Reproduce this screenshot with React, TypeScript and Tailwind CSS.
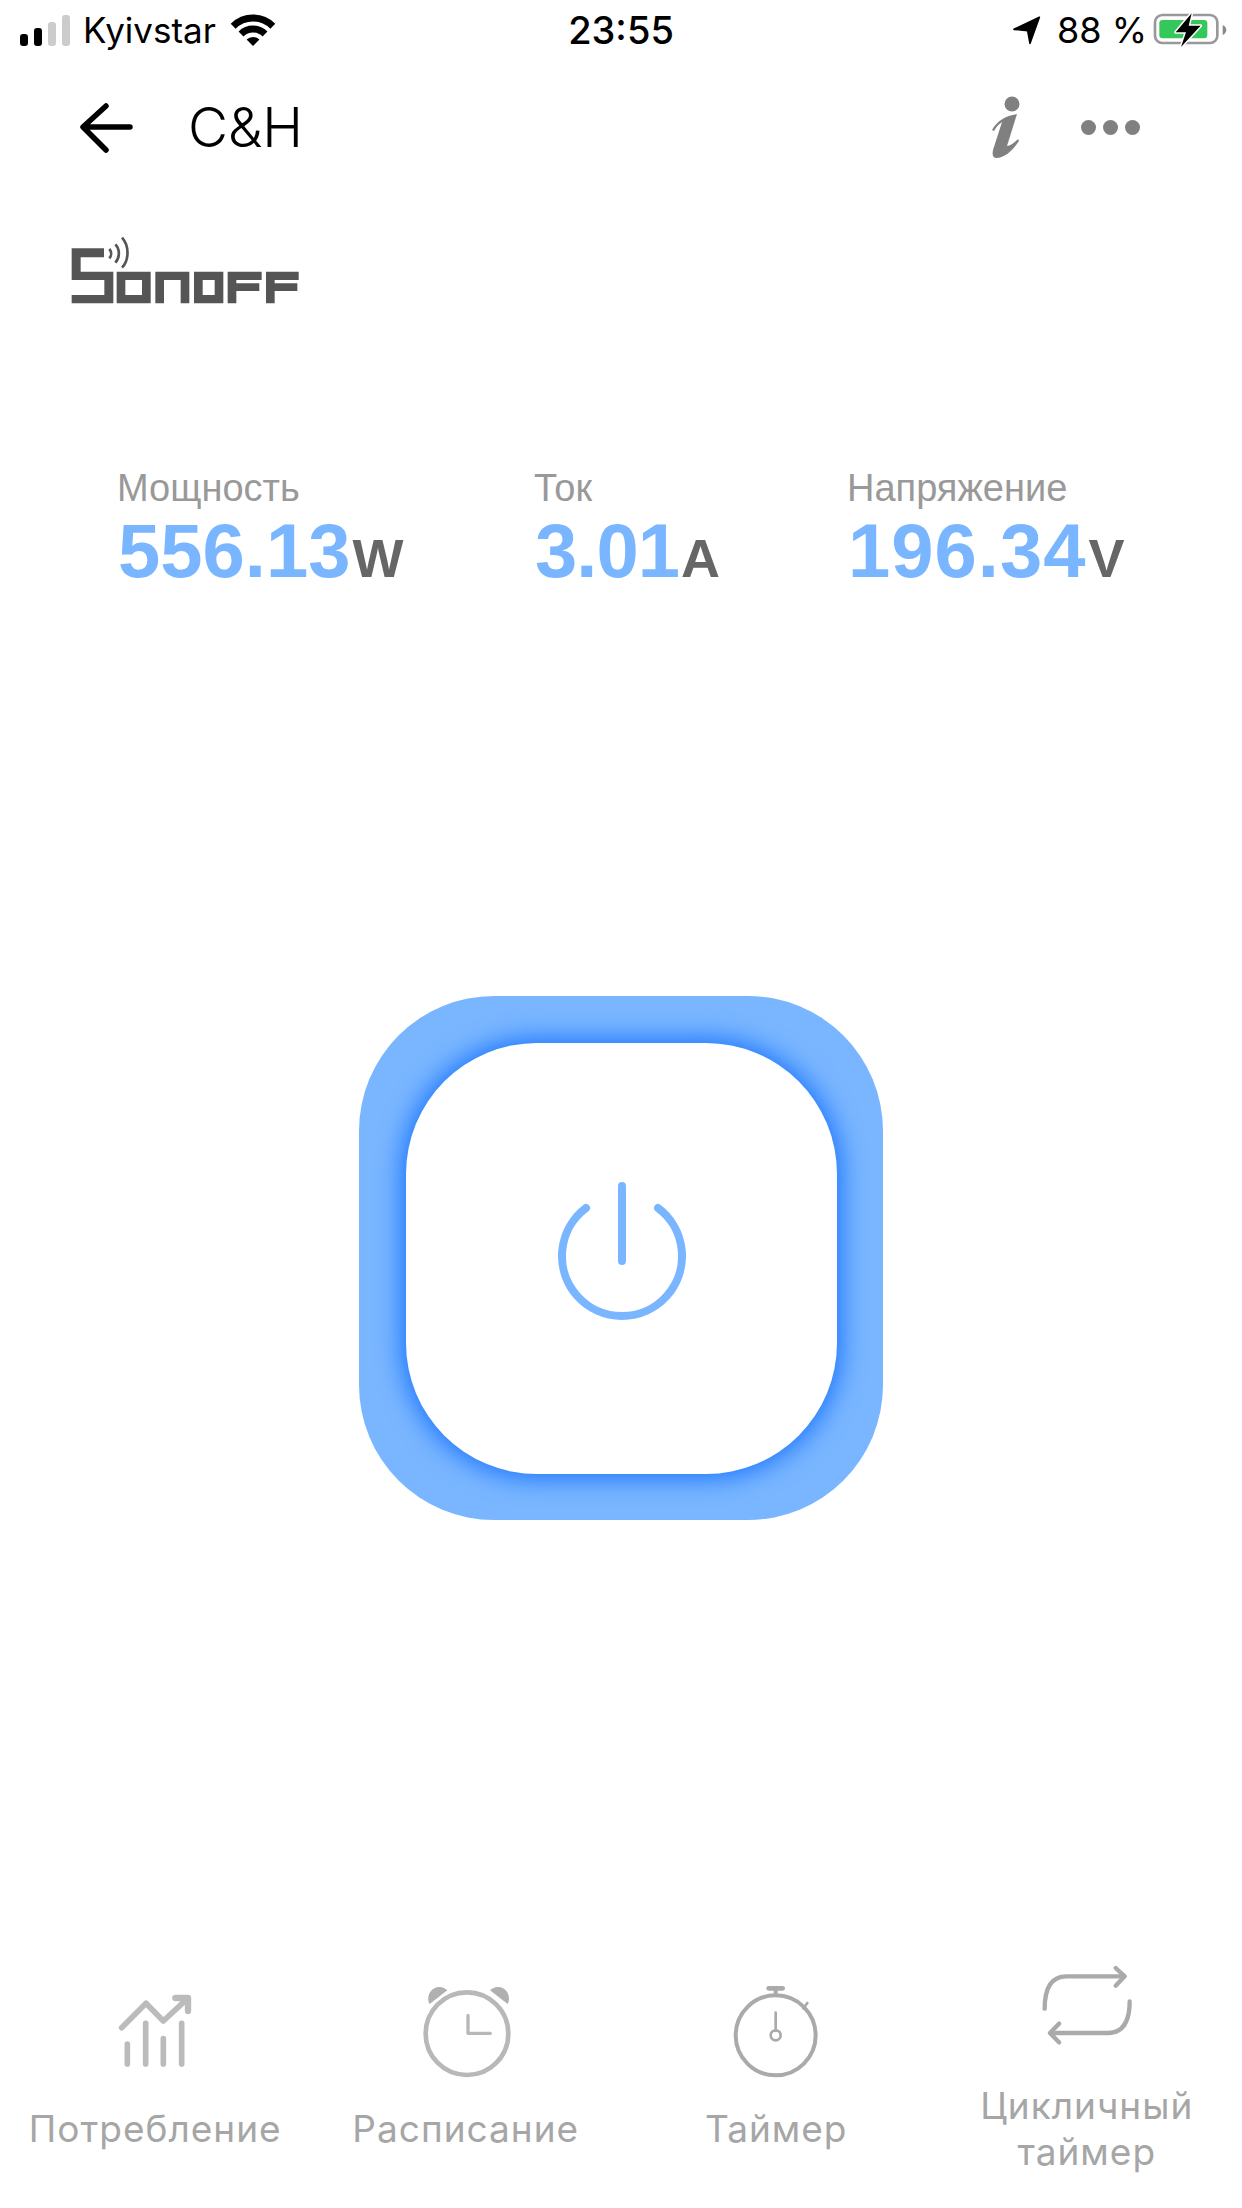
const STATS = [
  { label: "Мощность", value: "556.13", unit: "W", w: "w-[417px]", track: "tracking-[0px]" },
  { label: "Ток", value: "3.01", unit: "A", w: "w-[313px]", track: "tracking-[-1px]" },
  { label: "Напряжение", value: "196.34", unit: "V", w: "w-[300px]", track: "tracking-[1px]" },
];

function Wifi() {
  return (
    <svg width="46" height="34" viewBox="0 0 46 34" fill="none" className="ml-[14px]">
      <path d="M3.2 13.2A28 28 0 0 1 42.8 13.2" stroke="#000" strokeWidth="7" />
      <path d="M11 21A17 17 0 0 1 35 21" stroke="#000" strokeWidth="7" />
      <path d="M23 33L16.6 26.6A9 9 0 0 1 29.4 26.6Z" fill="#000" />
    </svg>
  );
}

function Battery() {
  return (
    <svg width="80" height="50" viewBox="450 0 240 150" fill="none">
      <rect x="465" y="30" width="187" height="84" rx="22" stroke="#999" strokeWidth="8" />
      <rect x="478" y="45" width="144" height="55" rx="10" fill="#34c759" />
      <path d="M668 60C676 64 679 70 679 75C679 80 676 86 668 90Z" fill="#888" />
      <path d="M575 25L527 82H558L543 126L602 62H566Z" fill="#000" stroke="#fff" strokeWidth="9" paintOrder="stroke" strokeLinejoin="round" />
    </svg>
  );
}

function Logo() {
  return (
    <svg width="250" height="90" viewBox="0 0 750 270" fill="#555" className="ml-[60px] mt-[31px]">
      <path d="M35 70H132V97H62V140H160V235H35V210H133V165H35Z" />
      <path fillRule="evenodd" d="M170 140H272V235H170ZM196 165V210H246V165Z" />
      <path d="M286 140H388V235H362V165H312V235H286Z" />
      <path fillRule="evenodd" d="M402 140H490V235H402ZM428 165V210H464V165Z" />
      <path d="M503 140H605V165H529V175H598V198H529V235H503Z" />
      <path d="M618 140H716V165H644V175H712V198H644V235H618Z" />
      <g fill="none" stroke="#555" strokeWidth="8">
        <path d="M148 72C155 80 155 92 148 100" />
        <path d="M166 58C180 72 180 98 166 113" />
        <path d="M186 38C208 62 208 105 186 128" />
      </g>
    </svg>
  );
}

function ChartIcon() {
  return (
    <svg width="110" height="110" viewBox="0 0 330 330" fill="none" stroke="#bbb" strokeWidth="17" strokeLinecap="round" strokeLinejoin="round">
      <path d="M65 155L138 82L190 135L262 68" />
      <path d="M226 66H264V105" strokeWidth="19" />
      <path d="M82 204V264M137 142V264M190 188V264M245 142V264" />
    </svg>
  );
}

function AlarmIcon() {
  return (
    <svg width="110" height="110" viewBox="2 0 330 330" fill="none" stroke="#b8b8b8">
      <circle cx="170" cy="173" r="124" strokeWidth="14" />
      <path d="M173 118V172H240" strokeWidth="10" strokeLinecap="round" strokeLinejoin="round" />
      <path d="M58 84C46 62 62 32 88 33C97 33 105 37 111 43Z" fill="#b0b0b0" stroke="none" />
      <path d="M292 84C304 62 288 32 262 33C253 33 245 37 239 43Z" fill="#b0b0b0" stroke="none" />
    </svg>
  );
}

function TimerIcon() {
  return (
    <svg width="110" height="110" viewBox="3 0 330 330" fill="none" stroke="#aaa" strokeLinecap="round">
      <circle cx="167" cy="178" r="120" strokeWidth="12" />
      <path d="M146 37H188" strokeWidth="14" />
      <path d="M167 37V58" strokeWidth="12" />
      <path d="M250 97L262 81" strokeWidth="8" />
      <path d="M167 110V165" strokeWidth="8" />
      <circle cx="167" cy="178" r="15" strokeWidth="8" />
    </svg>
  );
}

function CycleIcon() {
  return (
    <svg width="110" height="110" viewBox="7 0 330 330" fill="none" stroke="#aaa" strokeWidth="13" strokeLinecap="round" strokeLinejoin="round">
      <path d="M45 167C45 100 68 70 110 70H284" />
      <path d="M258 45L285 70L258 98" />
      <path d="M300 145C300 205 280 240 235 240H64" />
      <path d="M88 212L61 240L88 268" />
    </svg>
  );
}

const NAV = [
  { icon: <ChartIcon />, label: ["Потребление"] },
  { icon: <AlarmIcon />, label: ["Расписание"] },
  { icon: <TimerIcon />, label: ["Таймер"] },
  { icon: <CycleIcon />, label: ["Цикличный", "таймер"] },
];

export default function App() {
  return (
    <div className="flex h-[2208px] w-[1242px] flex-col overflow-hidden bg-white font-['Inter',sans-serif] text-black">
      <div className="grid h-[60px] shrink-0 grid-cols-3 items-center">
        <div className="flex items-center pl-[20px]">
          <div className="flex h-[31px] items-end gap-[6px]">
            <div className="h-[12px] w-[8px] rounded-[3px] bg-black" />
            <div className="h-[18px] w-[8px] rounded-[3px] bg-black" />
            <div className="h-[24px] w-[8px] rounded-[3px] bg-[#ccc]" />
            <div className="h-[31px] w-[8px] rounded-[3px] bg-[#ccc]" />
          </div>
          <span className="ml-[13px] text-[35px] leading-none">Kyivstar</span>
          <Wifi />
        </div>
        <div className="text-center text-[38px] font-medium leading-none">23:55</div>
        <div className="flex items-center justify-end pr-[12px]">
          <svg width="32" height="32" viewBox="30 30 96 96" fill="#000">
            <path d="M118 40L42 76L83 80L90 118Z" stroke="#000" strokeWidth="5" strokeLinejoin="round" />
          </svg>
          <span className="ml-[15px] mr-[3px] text-[36px] leading-none">88 %</span>
          <Battery />
        </div>
      </div>

      <div className="flex h-[134px] shrink-0 items-center pl-[79px] pr-[102px]">
        <svg width="56" height="52" viewBox="0 -2 56 52" fill="none" stroke="#000" strokeWidth="5.5" strokeLinecap="round" strokeLinejoin="round">
          <path d="M51 24H5M27 3L4 24L27 47" />
        </svg>
        <span className="ml-[53px] text-[55px] font-light leading-none">C&amp;H</span>
        <div className="flex-1" />
        <svg width="45" height="70" viewBox="0 0 45 70" fill="#808080">
          <circle cx="28" cy="12" r="7.5" />
          <path d="M8 38C13 29 21 24 33 22L23 54C26 54 30 51 34 47L35 49C29 58 21 66 12 66C9 66 8 63 9 58L18 30C15 32 12 35 10 39Z" />
        </svg>
        <div className="ml-[52px] flex gap-[7px]">
          <div className="h-[15px] w-[15px] rounded-full bg-[#808080]" />
          <div className="h-[15px] w-[15px] rounded-full bg-[#808080]" />
          <div className="h-[15px] w-[15px] rounded-full bg-[#808080]" />
        </div>
      </div>

      <Logo />

      <div className="mt-[153px] flex h-[128px] shrink-0 pl-[118px] font-['Liberation_Sans',sans-serif]">
        {STATS.map((s) => (
          <div key={s.label} className={`${s.w} shrink-0`}>
            <div className="-ml-[1px] text-[38px] leading-[40px] text-[#999]">{s.label}</div>
            <div className="mt-[5px] flex items-baseline font-bold leading-[76px]">
              <span className={`${s.track} text-[76px] text-[#7ab6ff]`}>{s.value}</span>
              <span className="ml-[2px] text-[54px] text-[#666]">{s.unit}</span>
            </div>
          </div>
        ))}
      </div>

      <div className="flex flex-1 items-center justify-center">
        <div className="flex h-[524px] w-[524px] items-center justify-center overflow-hidden rounded-[135px] bg-[#7ab6ff]">
          <div className="flex h-[431px] w-[431px] items-center justify-center rounded-[131px] bg-white shadow-[0_0_24px_5px_#1f78ff]">
            <svg width="160" height="160" viewBox="0 0 160 160" fill="none" stroke="#7ab6ff" strokeWidth="8" strokeLinecap="round">
              <path d="M81 8V83" />
              <path d="M45 30A60 60 0 1 0 117 30" />
            </svg>
          </div>
        </div>
      </div>

      <div className="grid h-[288px] shrink-0 grid-cols-4 text-[37px] leading-[46px] tracking-[1px] text-[#a6a6a6]">
        {NAV.map((n) => (
          <div key={n.label[0]} className="flex flex-col items-center justify-center">
            {n.icon}
            <div className="mt-[20px] text-center">
              {n.label.map((l) => (
                <div key={l}>{l}</div>
              ))}
            </div>
          </div>
        ))}
      </div>
    </div>
  );
}
